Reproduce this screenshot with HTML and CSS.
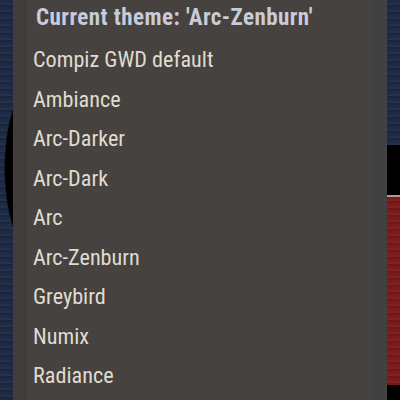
FILE: index.html
```html
<!DOCTYPE html>
<html lang="en">
<head>
<meta charset="UTF-8" />
<meta name="viewport" content="width=device-width, initial-scale=1" />
<title>Theme menu</title>
<link rel="stylesheet" href="styles.css">
</head>
<body>
<div class="desk desk-left"></div>
<div class="frame">
  <nav class="menu" aria-label="Window themes">
    <div class="menu-title">Current theme: 'Arc-Zenburn'</div>
    <ul class="menu-list">
      <li>Compiz GWD default</li>
      <li>Ambiance</li>
      <li>Arc-Darker</li>
      <li>Arc-Dark</li>
      <li>Arc</li>
      <li>Arc-Zenburn</li>
      <li>Greybird</li>
      <li>Numix</li>
      <li>Radiance</li>
    </ul>
  </nav>
</div>
<div class="desk desk-right"></div>
</body>
</html>
```

FILE: styles.css
```css
/* Reset and base */
* {
  box-sizing: border-box;
}
html, body {
  margin: 0;
  padding: 0;
  height: 100%;
}
body {
  display: flex;
  overflow: hidden;
  background: #1e2a44;
  font-family: 'Roboto', 'Liberation Sans', sans-serif;
  font-stretch: 75%;
}

/* Desktop peeking out at the sides */
.desk {
  flex: 0 0 13px;
  height: 100%;
}
.desk-left {
  background:
    radial-gradient(ellipse 46px 104px at 50px 168px, #000 97%, transparent 100%),
    repeating-linear-gradient(180deg, #1f2b45 0 3px, #24314d 3px 5px, #1b263e 5px 7px);
}
.desk-right {
  background:
    linear-gradient(180deg, transparent 0 145px, #000 145px 195px, #a89a9a 195px 197px, transparent 197px 385px, #000 385px),
    repeating-linear-gradient(180deg, #1f2b45 0 3px, #24314d 3px 5px, #1b263e 5px 7px) top / 100% 145px no-repeat,
    repeating-linear-gradient(180deg, #7b1c1c 0 3px, #86201f 3px 5px, #6f1818 5px 7px);
}

/* Menu window */
.frame {
  flex: 1;
  background: #464240;
  border-left: 14px solid #3f3e3d;
  border-right: 15px solid #414141;
}
.menu-title {
  padding: 4px 0 0 9px;
  height: 40px;
  color: #c8ccd8;
  font-size: 23px;
  font-weight: bold;
  letter-spacing: 0.45px;
}
.menu-list {
  list-style: none;
  margin: 0;
  padding: 0;
}
.menu-list li {
  height: 39.5px;
  line-height: 39.5px;
  padding-left: 6px;
  color: #e0dccf;
  font-size: 22.2px;
}
```
